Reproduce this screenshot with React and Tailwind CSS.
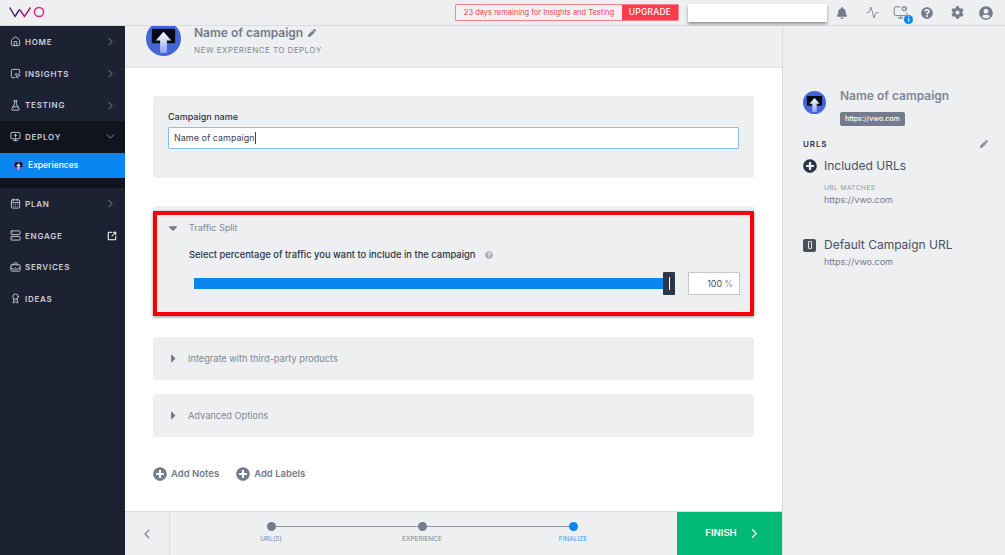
import {
  Home,
  ChevronRight,
  ChevronDown,
  ChevronLeft,
  FlaskConical,
  SquareMousePointer,
  MonitorUp,
  CalendarDays,
  Server,
  SquareArrowOutUpRight,
  BriefcaseBusiness,
  Award,
  Activity,
  MonitorCog,
} from "lucide-react";
import { FaBell, FaCog, FaPen, FaPlusCircle, FaQuestionCircle, FaUserCircle, FaCaretDown, FaCaretRight } from "react-icons/fa";

const CampaignIcon = ({ size }) => (
  <svg width={size} height={size} viewBox="0 0 36 36" className="shrink-0">
    <defs>
      <linearGradient id="arrowFade" x1="0" y1="0" x2="0" y2="1">
        <stop offset="0" stopColor="#ffffff" />
        <stop offset="1" stopColor="#8ea2ee" />
      </linearGradient>
    </defs>
    <circle cx="18" cy="18" r="18" fill="#4566d8" />
    <rect x="6" y="8" width="24" height="15" rx="1.5" fill="#070b16" />
    <path d="M18 11 L26 20 H21.5 V33 H14.5 V20 H10 Z" fill="url(#arrowFade)" />
  </svg>
);

const VwoLogo = () => (
  <svg width="37" height="13" viewBox="0 0 37 13" fill="none">
    <path d="M0.7 1.5 L6 10.5 L10.5 3.5" stroke="#3c1a63" strokeWidth="1.4" />
    <path d="M10.5 3.5 L15.5 10.5 L21.5 1.5" stroke="#a11f70" strokeWidth="1.4" />
    <circle cx="30" cy="6" r="4.6" stroke="#e0257f" strokeWidth="1.5" />
  </svg>
);

const NavItem = ({ icon: Icon, label, right }) => (
  <div className="flex h-[31.7px] items-center pl-[10px] pr-[8px] text-[#c9ced8]">
    <Icon size={11} strokeWidth={2} className="shrink-0" />
    <span className="ml-[4px] text-[8px] font-semibold tracking-[0.75px]">{label}</span>
    <span className="ml-auto">{right}</span>
  </div>
);

const Chevron = () => <ChevronRight size={13} strokeWidth={1.5} className="text-[#9ea5b3]" />;

const Sidebar = () => (
  <aside className="flex w-[125px] shrink-0 flex-col bg-[#1d2233]">
    <NavItem icon={Home} label="HOME" right={<Chevron />} />
    <NavItem icon={SquareMousePointer} label="INSIGHTS" right={<Chevron />} />
    <NavItem icon={FlaskConical} label="TESTING" right={<Chevron />} />
    <div className="h-[67px] bg-[#10141f]">
      <NavItem icon={MonitorUp} label="DEPLOY" right={<ChevronDown size={13} strokeWidth={1.5} className="text-[#9ea5b3]" />} />
      <div className="flex h-[25px] items-center gap-[4px] bg-[#0a86f0] pl-[13px]">
        <CampaignIcon size={11} />
        <span className="text-[8.5px] font-medium text-white">Experiences</span>
      </div>
    </div>
    <NavItem icon={CalendarDays} label="PLAN" right={<Chevron />} />
    <NavItem icon={Server} label="ENGAGE" right={<SquareArrowOutUpRight size={10} strokeWidth={2.5} className="text-white" />} />
    <NavItem icon={BriefcaseBusiness} label="SERVICES" />
    <NavItem icon={Award} label="IDEAS" />
  </aside>
);

const TopBar = () => (
  <header className="flex h-[26px] shrink-0 items-center border-b border-[#d8dbe2] bg-[#eeeff1]">
    <div className="ml-[9px] flex h-full w-[37px] items-center">
      <VwoLogo />
    </div>
    <div className="ml-[409px] flex h-[17px] w-[224px] items-stretch overflow-hidden rounded-[1px] border border-[#f4838f]">
      <div className="flex w-[166px] items-center justify-center bg-[#f1f2f4] text-[7.5px] text-[#f0404f]">
        23 days remaining for Insights and Testing
      </div>
      <div className="flex flex-1 items-center justify-center bg-[#fb3a4c] text-[8.5px] font-medium tracking-[0.2px] text-white">
        UPGRADE
      </div>
    </div>
    <div className="ml-[9px] h-[18px] w-[139px] bg-white shadow-[0_2px_3px_rgba(0,0,0,0.4)]" />
    <div className="ml-[9px] flex items-center text-[#737b8c]">
      <FaBell size={12} />
      <Activity size={13} strokeWidth={1.6} className="ml-[18px]" />
      <div className="relative ml-[14px]">
        <MonitorCog size={15} strokeWidth={1.5} />
        <span className="absolute -bottom-[4px] -right-[5px] flex h-[9px] w-[9px] items-center justify-center rounded-full bg-[#0a86f0] text-[6px] font-bold text-white">
          i
        </span>
      </div>
      <FaQuestionCircle size={12} className="ml-[13px]" />
      <FaCog size={13} className="ml-[18px]" />
      <FaUserCircle size={14} className="ml-[15px]" />
    </div>
  </header>
);

const CollapsedSection = ({ label }) => (
  <div className="flex h-[43px] items-center rounded-[3px] bg-[#eeeff1] pl-[14px]">
    <FaCaretRight size={13} className="text-[#737b8c]" />
    <span className="ml-[8px] text-[9.2px] text-[#7f8798]">{label}</span>
  </div>
);

const TrafficSplit = () => (
  <div className="relative mt-[28px] h-[110px] rounded-[3px] bg-[#eeeff1]">
    <div className="flex h-[42px] items-center pl-[13px] pt-[1px]">
      <FaCaretDown size={14} className="text-[#737b8c]" />
      <span className="ml-[9px] text-[9px] text-[#7f8798]">Traffic Split</span>
    </div>
    <div className="flex items-center pl-[36px]">
      <span className="text-[9.4px] font-medium text-[#2c3444]">Select percentage of traffic you want to include in the campaign</span>
      <FaQuestionCircle size={8} className="ml-[9px] text-[#a4a9b4]" />
    </div>
    <div className="mt-[10px] flex items-center pl-[41px]">
      <div className="h-[11px] w-[469px] bg-[#0a86f0]" />
      <div className="flex h-[23px] w-[12px] items-center justify-center rounded-[1px] bg-[#2b3648]">
        <span className="h-[13px] w-[1px] bg-white" />
      </div>
      <div className="ml-[13px] flex h-[23px] w-[52px] items-center justify-end border border-[#c3c8d2] bg-white pr-[6px]">
        <span className="text-[9px] text-[#4a5261]">100</span>
        <span className="ml-[2px] text-[9px] text-[#8a92a1]">%</span>
      </div>
    </div>
    {/* annotation drawn over the screenshot */}
    <div className="absolute inset-x-0 bottom-0 top-[5px] border-[4px] border-[#fb0007] shadow-[0_1px_3px_rgba(0,0,0,0.45)]" />
  </div>
);

const AddLink = ({ label }) => (
  <div className="flex items-center gap-[4px] text-[#737b8c]">
    <FaPlusCircle size={14} />
    <span className="text-[9.5px] font-semibold">{label}</span>
  </div>
);

const Step = ({ label, active }) => (
  <div className="relative z-10 flex w-[60px] flex-col items-center">
    <span className={`h-[9px] w-[9px] rounded-full ${active ? "bg-[#0a86f0]" : "bg-[#737b8c]"}`} />
    <span className={`mt-[4px] text-[6.5px] ${active ? "text-[#3e9bf0]" : "text-[#7f8798]"}`}>{label}</span>
  </div>
);

const Footer = () => (
  <div className="flex h-[44px] shrink-0 border-t border-[#d8dbe2] bg-[#eeeff1]">
    <div className="flex w-[45px] items-center justify-center border-r border-[#d8dbe2]">
      <ChevronLeft size={16} strokeWidth={1.6} className="text-[#737b8c]" />
    </div>
    <div className="relative flex flex-1 justify-between pl-[71px] pr-[74px] pt-[10px]">
      <div className="absolute left-[101px] right-[104px] top-[14px] h-[1px] bg-[#8d95a5]" />
      <Step label="URL(S)" />
      <Step label="EXPERIENCE" />
      <Step label="FINALIZE" active />
    </div>
    <div className="flex w-[105px] items-center justify-center gap-[10px] bg-[#00b976] pl-[8px] text-white">
      <span className="text-[9.5px] font-semibold">FINISH</span>
      <ChevronRight size={15} strokeWidth={2} />
    </div>
  </div>
);

const Main = () => (
  <main className="flex w-[657px] shrink-0 flex-col bg-white">
    <div className="flex h-[42px] shrink-0 items-start overflow-hidden border-b border-[#e2e4e9] bg-[#eeeff1] pl-[21px]">
      <div className="-mt-[5px]">
        <CampaignIcon size={35} />
      </div>
      <div className="ml-[13px]">
        <div className="flex items-center">
          <span className="text-[12px] font-semibold leading-[14px] text-[#737b8c]">Name of campaign</span>
          <FaPen size={8} className="ml-[5px] text-[#737b8c]" />
        </div>
        <div className="mt-[6px] text-[8px] leading-[9px] tracking-[0.45px] text-[#7f8798]">NEW EXPERIENCE TO DEPLOY</div>
      </div>
    </div>
    <div className="flex flex-1 flex-col px-[28px] pt-[28px]">
      <div className="h-[82px] rounded-[3px] bg-[#eeeff1] px-[15px] pt-[15px]">
        <div className="text-[9px] font-medium leading-[11px] text-[#2c3444]">Campaign name</div>
        <div className="mt-[5px] flex h-[22px] items-center rounded-[1px] border border-[#86bff2] bg-white pl-[5px] text-[9px] text-[#3d4452]">
          Name of campaign<span className="h-[12px] w-[1px] bg-[#3d4452]" />
        </div>
      </div>
      <TrafficSplit />
      <div className="mt-[21px]">
        <CollapsedSection label="Integrate with third-party products" />
      </div>
      <div className="mt-[14px]">
        <CollapsedSection label="Advanced Options" />
      </div>
      <div className="mt-[30px] flex gap-[17px]">
        <AddLink label="Add Notes" />
        <AddLink label="Add Labels" />
      </div>
    </div>
    <Footer />
  </main>
);

const RightPanel = () => (
  <aside className="flex-1 border-l border-[#d8dbe2] bg-[#eeeff1] pl-[20px] pr-[17px] pt-[63px]">
    <div className="flex">
      <div className="mt-[2px]">
        <CampaignIcon size={23} />
      </div>
      <div className="ml-[14px]">
        <div className="text-[12px] font-semibold leading-[14px] text-[#7f8798]">Name of campaign</div>
        <div className="mt-[8px] inline-block rounded-[2px] bg-[#737b8c] px-[5px] py-[2px] text-[7px] font-medium leading-[10px] text-white">
          https://vwo.com
        </div>
      </div>
    </div>
    <div className="mt-[11px] flex items-center justify-between">
      <span className="text-[8px] font-semibold tracking-[0.9px] text-[#2c3444]">URLS</span>
      <FaPen size={8} className="text-[#8a92a1]" />
    </div>
    <div className="mt-[8px] flex items-center">
      <FaPlusCircle size={14} className="text-[#2b3648]" />
      <span className="ml-[7px] text-[12px] leading-[16px] text-[#4a5261]">Included URLs</span>
    </div>
    <div className="ml-[21px] mt-[10px] text-[6.5px] leading-[8px] tracking-[0.5px] text-[#8a92a1]">URL MATCHES</div>
    <div className="ml-[21px] mt-[2px] text-[9px] leading-[11px] text-[#737b8c]">https://vwo.com</div>
    <div className="mt-[32px] flex items-center">
      <span className="flex h-[13px] w-[13px] items-center justify-center rounded-[2px] bg-[#4a4f5a]">
        <span className="h-[8px] w-[4px] rounded-[1px] border border-[#e5e5e5]" />
      </span>
      <span className="ml-[8px] text-[12px] leading-[16px] text-[#4a5261]">Default Campaign URL</span>
    </div>
    <div className="ml-[21px] mt-[3px] text-[9px] leading-[11px] text-[#737b8c]">https://vwo.com</div>
  </aside>
);

const App = () => (
  <div className="flex h-[555px] w-[1005px] flex-col overflow-hidden bg-white font-['Inter',sans-serif]">
    <TopBar />
    <div className="flex min-h-0 flex-1">
      <Sidebar />
      <Main />
      <RightPanel />
    </div>
  </div>
);

export default App;
